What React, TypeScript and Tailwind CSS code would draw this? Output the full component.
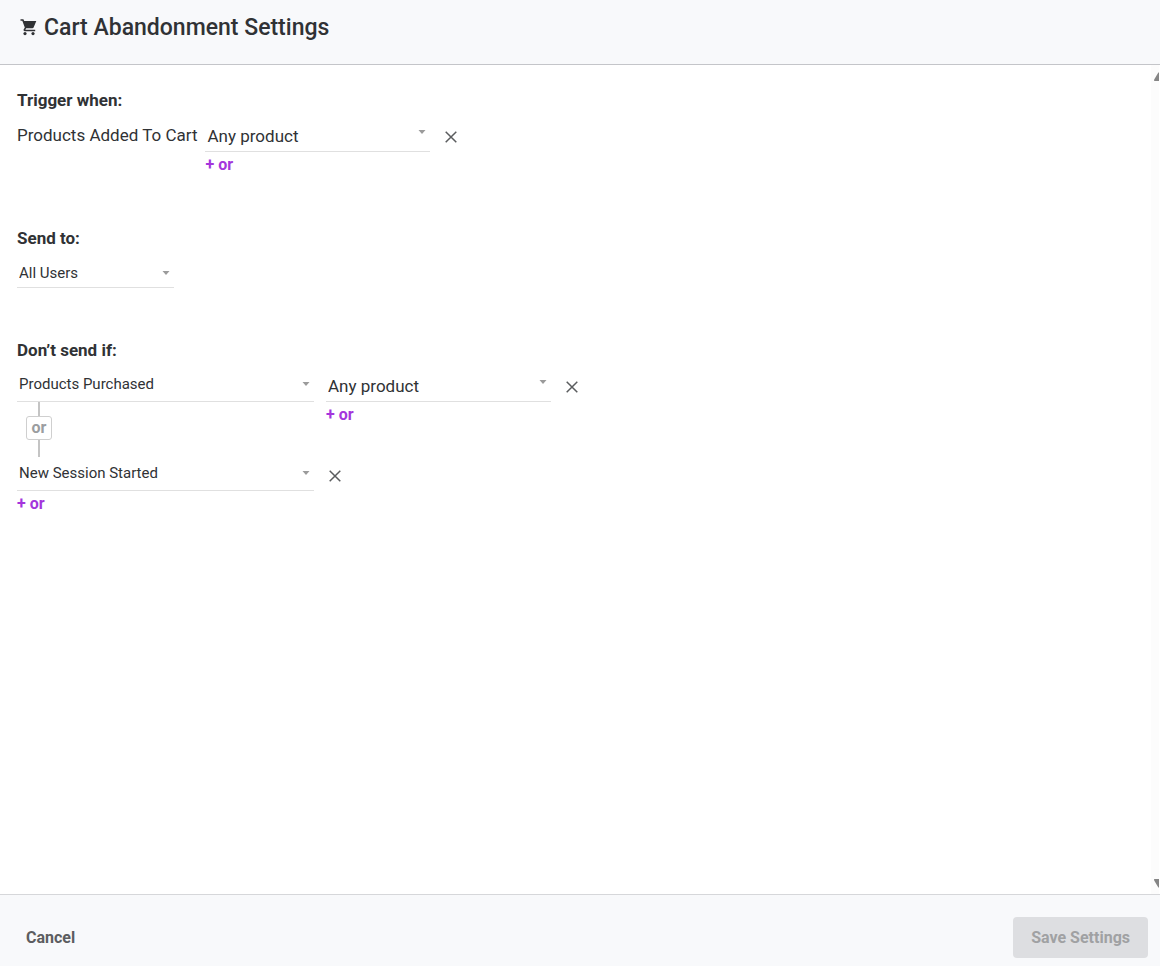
import { useState } from "react";

type SelectProps = {
  label: string;
  options: string[];
  className: string;
  arrowClassName: string;
  width: string;
};

function Select({ label, options, className, arrowClassName, width }: SelectProps) {
  const [value, setValue] = useState(options[0]);
  return (
    <div className={`relative ${width}`}>
      <select
        aria-label={label}
        value={value}
        onChange={(e) => setValue(e.target.value)}
        className={`block w-full appearance-none rounded-none border-b border-[#e0e0e0] bg-transparent pl-0.5 pr-6 text-[#303235] outline-none ${className}`}
      >
        {options.map((o) => (
          <option key={o}>{o}</option>
        ))}
      </select>
      <svg
        viewBox="0 0 8 4"
        className={`pointer-events-none absolute right-1 h-1 w-2 ${arrowClassName}`}
        aria-hidden="true"
      >
        <path d="M0.5 0h7L4 4z" fill="#9b9b9b" />
      </svg>
    </div>
  );
}

const eventSelect = "h-8 pb-0.5 text-[15px]";
const productSelect = "h-8 pt-0.5 text-[17px]";

function RemoveButton({ label }: { label: string }) {
  return (
    <button type="button" aria-label={label} className="mt-[7px] ml-[11px] flex h-5 w-5 items-center justify-center">
      <svg viewBox="0 0 12 12" className="h-3 w-3" aria-hidden="true">
        <path d="M0.7 0.7l10.6 10.6M11.3 0.7L0.7 11.3" stroke="#5a5c5e" strokeWidth="1.5" fill="none" />
      </svg>
    </button>
  );
}

function AddOr() {
  return (
    <button type="button" className="block pt-0.5 text-base leading-[22px] font-bold text-[#a435dc]">
      + or
    </button>
  );
}

function ProductFilter({ label }: { label: string }) {
  return (
    <div>
      <Select
        label={label}
        options={["Any product", "Specific product"]}
        width="w-[225px]"
        className={productSelect}
        arrowClassName="top-2.5"
      />
      <AddOr />
    </div>
  );
}

function Heading({ children }: { children: string }) {
  return <h2 className="mb-2 text-[17px] leading-6 font-bold text-[#303235]">{children}</h2>;
}

export default function App() {
  return (
    <div className="flex min-h-screen flex-col bg-white pb-0.5 font-[Roboto,sans-serif] text-[#303235]">
      <header className="flex h-[65px] items-start gap-[7px] border-b border-[#c4c5c9] bg-[#f8f9fb] px-5 pt-3">
        <svg viewBox="0 0 17 17" className="mt-[7px] h-[17px] w-[17px]" fill="#303235" aria-hidden="true">
          <path d="M0.5 0.3h2.9l0.8 1.6h12.1l-2.7 6.5q-0.4 0.8-1.3 0.8H6.2l-0.9 1.6h9.9v1.4H4.6q-1.6-0.2-1-1.6l1.2-2.2L2.3 1.7H0.5z" />
          <circle cx="5" cy="14.6" r="1.6" />
          <circle cx="13" cy="14.6" r="1.6" />
        </svg>
        <h1 className="text-[23px] leading-8 font-medium">Cart Abandonment Settings</h1>
      </header>

      <div className="flex flex-1">
        <main className="flex-1 px-[17px] pt-[23px]">
          <section className="mb-[50px]">
            <Heading>Trigger when:</Heading>
            <div className="flex items-start">
              <span className="mr-2 text-[17px] leading-[30px]">Products Added To Cart</span>
              <ProductFilter label="Product added to cart" />
              <RemoveButton label="Remove product filter" />
            </div>
          </section>

          <section className="mb-[50px]">
            <Heading>Send to:</Heading>
            <Select
              label="Send to"
              options={["All Users", "Selected segment"]}
              width="w-[157px]"
              className="h-[30px] pt-0.5 text-[15px]"
              arrowClassName="top-[13px]"
            />
          </section>

          <section>
            <Heading>Don’t send if:</Heading>
            <div className="flex items-start">
              <div>
                <Select
                  label="First exclusion event"
                  options={["Products Purchased", "New Session Started"]}
                  width="w-[297px]"
                  className={eventSelect}
                  arrowClassName="top-3"
                />
                <div className="ml-[9px] flex w-[26px] flex-col items-center">
                  <span className="h-3.5 w-0.5 bg-[#c4c4c4]" />
                  <span className="flex h-6 w-full items-center justify-center rounded-[3px] border border-[#cfcfcf] text-base leading-5 font-bold text-[#9b9da0]">
                    or
                  </span>
                  <span className="h-[17px] w-0.5 bg-[#c4c4c4]" />
                </div>
              </div>
              <div className="ml-3">
                <ProductFilter label="Product purchased" />
              </div>
              <RemoveButton label="Remove purchase exclusion" />
            </div>
            <div className="mt-0.5 flex items-start">
              <div>
                <Select
                  label="Second exclusion event"
                  options={["New Session Started", "Products Purchased"]}
                  width="w-[297px]"
                  className={eventSelect}
                  arrowClassName="top-3"
                />
                <AddOr />
              </div>
              <RemoveButton label="Remove session exclusion" />
            </div>
          </section>
        </main>

        <div className="mr-px flex w-2 flex-col justify-between overflow-hidden bg-[#fcfcfc] pt-[7px] pb-1.5" aria-hidden="true">
          <svg viewBox="0 0 8 9" className="h-[9px] w-2" fill="#858585">
            <path d="M3.6 9Q2.6 9 3.2 7.6L6.6 1.8Q7.2 0.6 8 0.2V9z" />
          </svg>
          <svg viewBox="0 0 8 9" className="h-[9px] w-2" fill="#858585">
            <path d="M3.6 0Q2.6 0 3.2 1.4L6.6 7.2Q7.2 8.4 8 8.8V0z" />
          </svg>
        </div>
      </div>

      <footer className="flex h-[72px] items-center justify-between border-t border-[#d6d7da] bg-[#f8f9fb] pt-3.5 pr-3 pl-[26px]">
        <button type="button" className="text-base font-bold text-[#5c5d60]">
          Cancel
        </button>
        <button
          type="button"
          disabled
          className="h-[41px] rounded bg-[#dddee1] px-[18px] text-base font-bold text-[#a0a1a3]"
        >
          Save Settings
        </button>
      </footer>
    </div>
  );
}
